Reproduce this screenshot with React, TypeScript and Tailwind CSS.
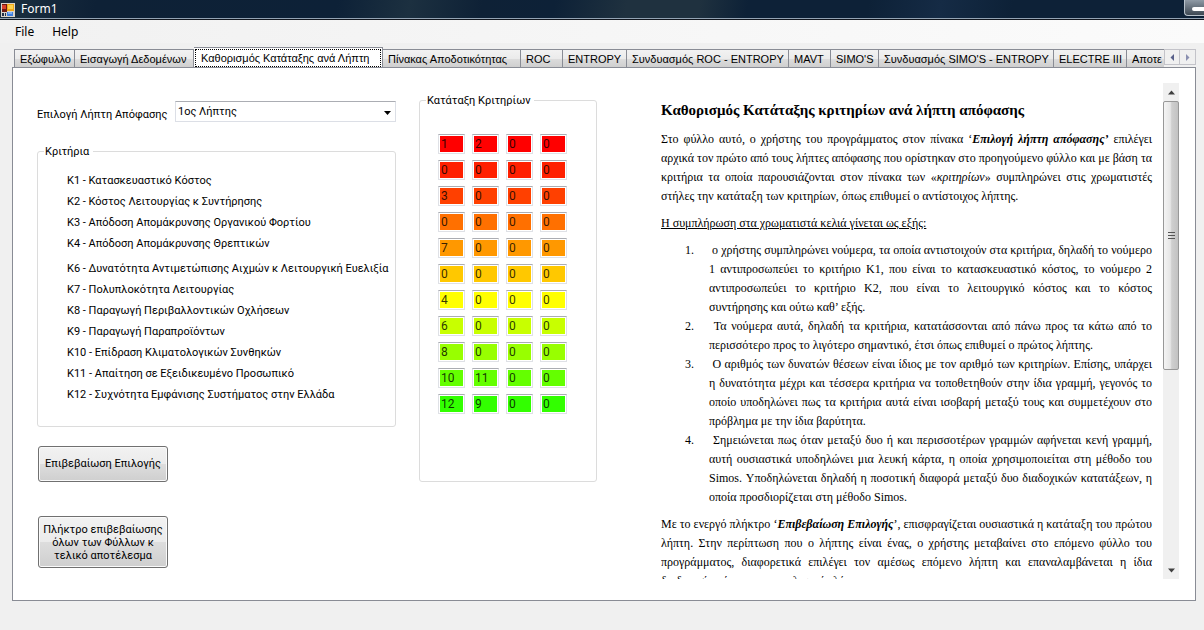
import { useState } from "react";

const tabs = [
  { label: "Εξώφυλλο", width: "w-[61px]" },
  { label: "Εισαγωγή Δεδομένων", width: "w-[119px]" },
  { label: "Καθορισμός Κατάταξης ανά Λήπτη", width: "w-[189px]" },
  { label: "Πίνακας Αποδοτικότητας", width: "w-[138px]" },
  { label: "ROC", width: "w-[42px]" },
  { label: "ENTROPY", width: "w-[64px]" },
  { label: "Συνδυασμός ROC - ENTROPY", width: "w-[162px]" },
  { label: "MAVT", width: "w-[42px]" },
  { label: "SIMO'S", width: "w-[48px]" },
  { label: "Συνδυασμός SIMO'S - ENTROPY", width: "w-[175px]" },
  { label: "ELECTRE III", width: "w-[73px]" },
  { label: "Αποτε", width: "w-[90px]" },
];

const criteriaGroups = [
  [
    "K1 - Κατασκευαστικό Κόστος",
    "K2 - Κόστος Λειτουργίας κ Συντήρησης",
    "K3 - Απόδοση Απομάκρυνσης Οργανικού Φορτίου",
    "K4 - Απόδοση Απομάκρυνσης Θρεπτικών",
  ],
  [
    "K6 - Δυνατότητα Αντιμετώπισης Αιχμών κ Λειτουργική Ευελιξία",
    "K7 - Πολυπλοκότητα Λειτουργίας",
    "K8 - Παραγωγή Περιβαλλοντικών Οχλήσεων",
    "K9 - Παραγωγή Παραπροϊόντων",
    "K10 - Επίδραση Κλιματολογικών Συνθηκών",
    "K11 - Απαίτηση σε Εξειδικευμένο Προσωπικό",
    "K12 - Συχνότητα Εμφάνισης Συστήματος στην Ελλάδα",
  ],
];

const ranking = [
  { color: "bg-[#ff0000]", values: ["1", "2", "0", "0"] },
  { color: "bg-[#ff2000]", values: ["0", "0", "0", "0"] },
  { color: "bg-[#ff4000]", values: ["3", "0", "0", "0"] },
  { color: "bg-[#ff7000]", values: ["0", "0", "0", "0"] },
  { color: "bg-[#ff9800]", values: ["7", "0", "0", "0"] },
  { color: "bg-[#ffc800]", values: ["0", "0", "0", "0"] },
  { color: "bg-[#ffff00]", values: ["4", "0", "0", "0"] },
  { color: "bg-[#c8ff00]", values: ["6", "0", "0", "0"] },
  { color: "bg-[#98ff00]", values: ["8", "0", "0", "0"] },
  { color: "bg-[#64ff00]", values: ["10", "11", "0", "0"] },
  { color: "bg-[#32ff00]", values: ["12", "9", "0", "0"] },
];

const steps = [
  "ο χρήστης συμπληρώνει νούμερα, τα οποία αντιστοιχούν στα κριτήρια, δηλαδή το νούμερο 1 αντιπροσωπεύει το κριτήριο Κ1, που είναι το κατασκευαστικό κόστος, το νούμερο 2 αντιπροσωπεύει το κριτήριο Κ2, που είναι το λειτουργικό κόστος και το κόστος συντήρησης και ούτω καθ’ εξής.",
  "Τα νούμερα αυτά, δηλαδή τα κριτήρια, κατατάσσονται από πάνω προς τα κάτω από το περισσότερο προς το λιγότερο σημαντικό, έτσι όπως επιθυμεί ο πρώτος λήπτης.",
  "Ο αριθμός των δυνατών θέσεων είναι ίδιος με τον αριθμό των κριτηρίων. Επίσης, υπάρχει η δυνατότητα μέχρι και τέσσερα κριτήρια να τοποθετηθούν στην ίδια γραμμή, γεγονός το οποίο υποδηλώνει πως τα κριτήρια αυτά είναι ισοβαρή μεταξύ τους και συμμετέχουν στο πρόβλημα με την ίδια βαρύτητα.",
  "Σημειώνεται πως όταν μεταξύ δυο ή και περισσοτέρων γραμμών αφήνεται κενή γραμμή, αυτή ουσιαστικά υποδηλώνει μια λευκή κάρτα, η οποία χρησιμοποιείται στη μέθοδο του Simos. Υποδηλώνεται δηλαδή η ποσοτική διαφορά μεταξύ δυο διαδοχικών κατατάξεων, η οποία προσδιορίζεται στη μέθοδο Simos.",
];

function AppIcon() {
  return (
    <svg width="16" height="17" viewBox="0 0 16 17" aria-hidden="true">
      <rect x="1" y="3" width="14" height="14" fill="#d9d4cc" />
      <rect x="2" y="4" width="5" height="8" fill="#6e1a12" />
      <rect x="2" y="5" width="4" height="4" fill="#d8412c" />
      <rect x="7" y="4" width="7" height="7" fill="#f0a818" />
      <rect x="8" y="5" width="5" height="4" fill="#fbd14e" />
      <rect x="7" y="12" width="6" height="4" fill="#3f7fe0" />
      <rect x="8" y="12" width="4" height="2" fill="#7fb0f4" />
      <rect x="2" y="13" width="2" height="3" fill="#20304a" />
      <rect x="5" y="13" width="1" height="3" fill="#20304a" />
    </svg>
  );
}

function Arrow({ d, fill }: { d: string; fill: string }) {
  return (
    <svg width="7" height="7" viewBox="0 0 7 7" aria-hidden="true">
      <path d={d} fill={fill} />
    </svg>
  );
}

export default function App() {
  const [active, setActive] = useState(2);

  return (
    <div className="flex min-h-screen flex-col bg-[#f0f0f0] font-[Roboto,sans-serif] text-[11px] text-black">
      <header className="flex h-5 items-start justify-between border-b border-[#10151d] bg-[linear-gradient(100deg,#1c3040_0%,#0e2136_8%,#0d2137_28%,#1c3040_34%,#0e2136_40%,#0d2137_46%,#1f313f_52%,#1f313f_58%,#0d2137_62%,#0d2137_72%,#152b45_78%,#0d2137_84%)] font-['Noto_Sans',sans-serif] text-white shadow-[inset_0_-1px_0_#93a3b3]">
        <div className="flex items-start gap-[5px]">
          <AppIcon />
          <h1 className="pt-px text-xs leading-4">Form1</h1>
        </div>
        <button
          type="button"
          aria-label="Ελαχιστοποίηση"
          className="flex h-4 w-5 items-end justify-end rounded-bl border-b border-l border-[#b9c3cc] bg-[linear-gradient(#8f9aa5,#3d4853)] pb-1"
        >
          <span className="h-1 w-3 rounded-l-xs bg-white" />
        </button>
      </header>

      <nav className="flex h-[23px] items-center gap-[18px] bg-[linear-gradient(90deg,#f1f1f1,#fbfbfb)] px-[15px] pt-px font-['Noto_Sans',sans-serif] text-xs">
        <button type="button">File</button>
        <button type="button">Help</button>
      </nav>

      <main className="flex flex-col pt-1 pr-2 pl-3">
        <div className="flex h-5 items-end">
          <div
            role="tablist"
            className="flex min-w-0 flex-1 items-end overflow-hidden pl-[2px] font-['Liberation_Sans',sans-serif]"
          >
            {tabs.map((tab, i) => (
              <button
                key={tab.label}
                type="button"
                role="tab"
                aria-selected={i === active}
                onClick={() => setActive(i)}
                className={`${tab.width} shrink-0 border-t border-r border-[#898c95] text-left whitespace-nowrap ${
                  i === active
                    ? "h-5 bg-white p-px"
                    : "h-[18px] bg-[linear-gradient(#f2f2f2_0%,#ebebeb_50%,#dddddd_51%,#cfcfcf_100%)] pt-px pl-[5px] first:border-l"
                }`}
              >
                {i === active ? (
                  <span className="block border border-dotted border-black pl-[5px] leading-4">{tab.label}</span>
                ) : (
                  tab.label
                )}
              </button>
            ))}
          </div>
          <div className="flex h-[18px] items-start">
            <button type="button" aria-label="Προηγούμενες καρτέλες" className="flex h-4 w-4 items-center justify-center border border-[#c3c3c9] bg-[#f0f0f0]">
              <Arrow d="M5 0 L1.5 3.5 L5 7Z" fill="#59608a" />
            </button>
            <button type="button" aria-label="Επόμενες καρτέλες" className="flex h-4 w-4 items-center justify-center border border-l-0 border-[#c3c3c9] bg-[#f0f0f0]">
              <Arrow d="M2 0 L5.5 3.5 L2 7Z" fill="#8a8fb0" />
            </button>
          </div>
        </div>

        <section className="flex border border-[#898c95] bg-white pt-[15px] pr-4 pb-[21px] pl-6">
          <div className="flex w-[359px] shrink-0 flex-col items-start pt-[18px]">
            <div className="flex h-[21px] w-full items-center justify-between">
              <label htmlFor="decision-maker" className="pt-2 whitespace-nowrap">
                Επιλογή Λήπτη Απόφασης
              </label>
              <div className="relative h-[21px] w-[221px]">
                <select
                  id="decision-maker"
                  className="h-full w-full appearance-none border border-[#dcdfe6] border-t-[#abadb3] bg-white pt-[2px] pl-[2px]"
                >
                  <option>1ος Λήπτης</option>
                  <option>2ος Λήπτης</option>
                </select>
                <svg width="7" height="4" viewBox="0 0 7 4" className="pointer-events-none absolute top-[10px] right-[5px]" aria-hidden="true">
                  <path d="M0 0H7L3.500 4Z" fill="#000" />
                </svg>
              </div>
            </div>

            <fieldset className="mt-[22px] h-[283px] w-full min-w-0 rounded-[3px] border border-[#dcdcdc]">
              <legend className="ml-[6px] pt-px pr-1 pl-px leading-[14px]">Κριτήρια</legend>
              <div className="flex flex-col gap-1 pt-[11px] pl-[29px] leading-[21px]">
                {criteriaGroups.map((group) => (
                  <ul key={group[0]}>
                    {group.map((item) => (
                      <li key={item} className="whitespace-nowrap">
                        {item}
                      </li>
                    ))}
                  </ul>
                ))}
              </div>
            </fieldset>

            <button
              type="button"
              className="mt-[19px] ml-px h-9 w-[130px] rounded-[3px] border border-[#707070] bg-[linear-gradient(#f2f2f2_0%,#ebebeb_50%,#dddddd_51%,#cfcfcf_100%)] shadow-[inset_0_0_0_1px_#fafafa]"
            >
              Επιβεβαίωση Επιλογής
            </button>
            <button
              type="button"
              className="mt-[34px] ml-px h-[52px] w-[130px] rounded-[3px] border border-[#707070] bg-[linear-gradient(#f2f2f2_0%,#ebebeb_50%,#dddddd_51%,#cfcfcf_100%)] px-1 leading-[13px] shadow-[inset_0_0_0_1px_#fafafa]"
            >
              Πλήκτρο επιβεβαίωσης όλων των Φύλλων κ τελικό αποτέλεσμα
            </button>
          </div>

          <div className="ml-[23px] w-[178px] shrink-0 pt-[10px]">
            <fieldset className="h-[389px] min-w-0 rounded-[3px] border border-[#dcdcdc]">
              <legend className="ml-[6px] pt-px pr-1 pl-px leading-[14px]">Κατάταξη Κριτηρίων</legend>
              <div className="grid grid-cols-[repeat(4,27px)] gap-x-[7px] gap-y-[6px] pt-[26px] pl-[18px]">
                {ranking.map((row, r) =>
                  row.values.map((value, c) => (
                    <input
                      key={`${r}-${c}`}
                      aria-label={`Θέση ${r + 1}, κελί ${c + 1}`}
                      defaultValue={value}
                      className={`h-5 w-full border border-[#dfe1e6] border-t-[#abadb3] bg-clip-content p-px indent-px text-xs leading-4 text-black/80 ${row.color}`}
                    />
                  )),
                )}
              </div>
            </fieldset>
          </div>

          <div className="ml-16 flex h-[496px] min-w-0 flex-1">
            <article className="flex min-w-0 flex-1 flex-col gap-2 overflow-hidden pt-[17px] pr-[11px] font-['Liberation_Serif',serif] text-xs leading-[19px]">
              <h2 className="mb-[2px] text-[15px] leading-5 font-bold">
                Καθορισμός Κατάταξης κριτηρίων ανά λήπτη απόφασης
              </h2>
              <p className="text-justify">
                Στο φύλλο αυτό, ο χρήστης του προγράμματος στον πίνακα ‘<b><i>Επιλογή λήπτη απόφασης’</i></b> επιλέγει
                αρχικά τον πρώτο από τους λήπτες απόφασης που ορίστηκαν στο προηγούμενο φύλλο και με βάση τα κριτήρια
                τα οποία παρουσιάζονται στον πίνακα των «<i>κριτηρίων</i>» συμπληρώνει στις χρωματιστές στήλες την
                κατάταξη των κριτηρίων, όπως επιθυμεί ο αντίστοιχος λήπτης.
              </p>
              <p className="underline">Η συμπλήρωση στα χρωματιστά κελιά γίνεται ως εξής:</p>
              <ol>
                {steps.map((step, i) => (
                  <li key={step} className="flex pl-6">
                    <span className="w-6 shrink-0">{i + 1}.</span>
                    <span className="text-justify">&nbsp;{step}</span>
                  </li>
                ))}
              </ol>
              <p className="text-justify">
                Με το ενεργό πλήκτρο ‘<b><i>Επιβεβαίωση Επιλογής</i></b>’, επισφραγίζεται ουσιαστικά η κατάταξη του
                πρώτου λήπτη. Στην περίπτωση που ο λήπτης είναι ένας, ο χρήστης μεταβαίνει στο επόμενο φύλλο του
                προγράμματος, διαφορετικά επιλέγει τον αμέσως επόμενο λήπτη και επαναλαμβάνεται η ίδια διαδικασία μέχρι
                και τον τελευταίο λήπτη.
              </p>
            </article>

            <div className="flex w-4 shrink-0 flex-col bg-[#f0f0f0]">
              <button type="button" aria-label="Κύλιση πάνω" className="flex h-[18px] items-center justify-center">
                <Arrow d="M0 5.500 L3.500 1.500 L7 5.500Z" fill="#404040" />
              </button>
              <div className="flex h-[269px] flex-col items-center justify-center gap-[2px] rounded-xs border border-[#989898] bg-[linear-gradient(90deg,#f4f4f4,#e6e6e6_45%,#cfcfcf_55%,#c2c2c2)]">
                <span className="h-px w-[7px] bg-[#555]" />
                <span className="h-px w-[7px] bg-[#555]" />
                <span className="h-px w-[7px] bg-[#555]" />
              </div>
              <div className="flex-1" />
              <button type="button" aria-label="Κύλιση κάτω" className="flex h-[18px] items-center justify-center">
                <Arrow d="M0 1.500 L3.500 5.500 L7 1.500Z" fill="#404040" />
              </button>
            </div>
          </div>
        </section>
      </main>
    </div>
  );
}
